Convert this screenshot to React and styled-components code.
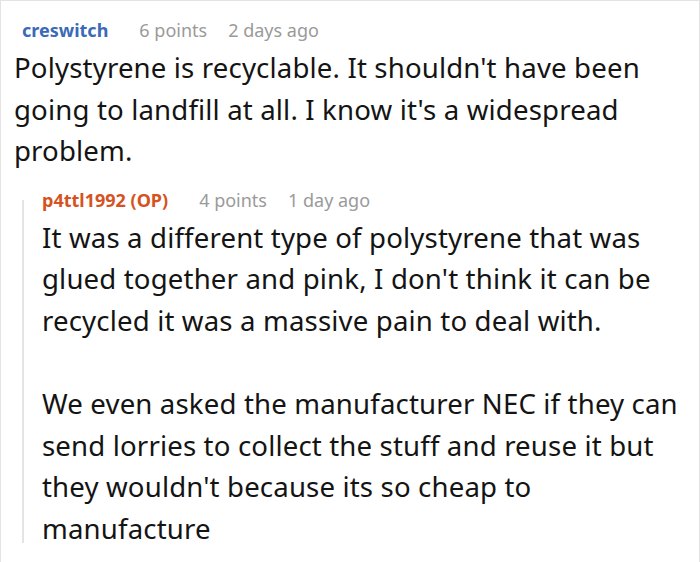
import React from "react";
import styled, { createGlobalStyle } from "styled-components";

const Global = createGlobalStyle`
  html, body { margin: 0; padding: 0; background: #fff; }
  body { font-family: "Noto Sans", "Open Sans", sans-serif; }
`;

const Frame = styled.div`
  box-sizing: border-box;
  width: 700px;
  height: 562px;
  border: 1px solid #e3e3e3;
  border-bottom: none;
`;

const Inner = styled.div`
  box-sizing: border-box;
  height: 542px;
  overflow: hidden;
  padding: 12px 0 0 13px;
`;

const Comment = styled.div`
  display: flex;
  flex-direction: column;
`;

const Header = styled.div`
  display: flex;
  align-items: baseline;
  font-size: 18px;
  line-height: 34px;
  white-space: nowrap;
  padding-left: ${(p) => p.$indent || 0}px;
`;

const Author = styled.span`
  font-weight: 700;
  color: ${(p) => (p.$op ? "#d4531f" : "#3a6ab8")};
  margin-right: 31px;
`;

const Meta = styled.span`
  color: #9a9a9a;
  margin-right: 21px;
`;

const Body = styled.div`
  font-size: 27.6px;
  line-height: 41.6px;
  letter-spacing: 0.15px;
  color: #141414;
`;

const Para = styled.p`
  margin: 0;
  & + & {
    margin-top: 41.6px;
  }
`;

const Replies = styled.div`
  display: grid;
  grid-template-columns: 2px 1fr;
  column-gap: 18px;
  margin: 11px 0 0 8px;
`;

const Rail = styled.div`
  margin-top: 17px;
  background: #e4e4e4;
`;

export default function App() {
  return (
    <>
      <Global />
      <Frame>
        <Inner>
          <Comment>
            <Header $indent={8}>
              <Author>creswitch</Author>
              <Meta>6 points</Meta>
              <Meta>2 days ago</Meta>
            </Header>
            <Body>
              <Para>
                Polystyrene is recyclable. It shouldn't have been going to landfill at all. I know it's a widespread problem.
              </Para>
            </Body>
            <Replies>
              <Rail />
              <Comment>
                <Header>
                  <Author $op>p4ttl1992 (OP)</Author>
                  <Meta>4 points</Meta>
                  <Meta>1 day ago</Meta>
                </Header>
                <Body>
                  <Para>
                    It was a different type of polystyrene that was glued together and pink, I don't think it can be recycled it was a massive pain to deal with.
                  </Para>
                  <Para>
                    We even asked the manufacturer NEC if they can send lorries to collect the stuff and reuse it but they wouldn't because its so cheap to manufacture
                  </Para>
                </Body>
              </Comment>
            </Replies>
          </Comment>
        </Inner>
      </Frame>
    </>
  );
}
